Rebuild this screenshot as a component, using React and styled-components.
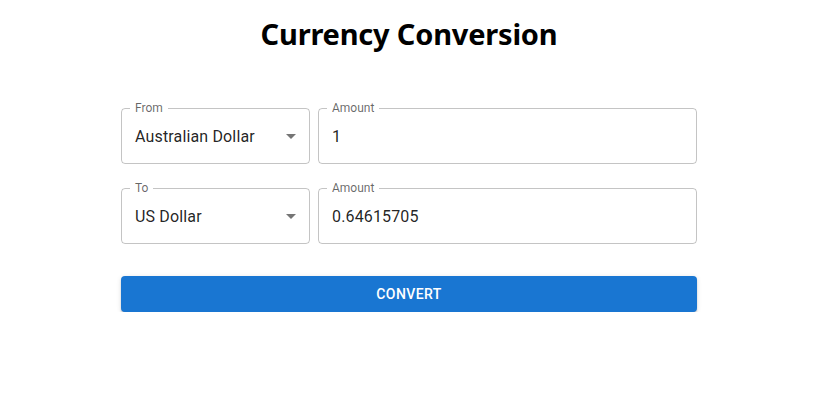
import React from 'react';
import styled, { createGlobalStyle } from 'styled-components';

const GlobalStyle = createGlobalStyle`
  body {
    margin: 0;
    background: #fff;
    font-family: Roboto, "Liberation Sans", sans-serif;
    color: rgba(0, 0, 0, 0.87);
  }
`;

const Page = styled.div`
  width: 576px;
  margin: 0 auto;
  padding: 14px 2px 0 0;
`;

const Title = styled.h1`
  margin: 0 0 54px;
  text-align: center;
  font-family: "Noto Sans", "Open Sans", sans-serif;
  font-weight: 700;
  font-size: 29px;
  line-height: 40px;
  color: #000;
  letter-spacing: -0.2px;
`;

const Row = styled.div`
  display: grid;
  grid-template-columns: 189px 1fr;
  gap: 8px;
  margin-bottom: 24px;
`;

const Field = styled.div`
  position: relative;
  height: 56px;
  box-sizing: border-box;
  display: flex;
  align-items: center;
  padding: 0 14px;
`;

const Outline = styled.fieldset`
  position: absolute;
  inset: -5px 0 0 0;
  margin: 0;
  padding: 0 8px;
  border: 1px solid rgba(0, 0, 0, 0.23);
  border-radius: 4px;
  pointer-events: none;
  text-align: left;
`;

const Legend = styled.legend`
  padding: 0 5px;
  font-size: 12px;
  line-height: 11px;
  color: rgba(0, 0, 0, 0.6);
  font-family: Roboto, sans-serif;
`;

const Value = styled.span`
  font-size: 16px;
  letter-spacing: 0.15px;
  flex: 1;
  white-space: nowrap;
`;

const Arrow = styled.svg`
  position: absolute;
  right: 7px;
  top: 16px;
  width: 24px;
  height: 24px;
  fill: rgba(0, 0, 0, 0.54);
`;

const ConvertButton = styled.button`
  display: block;
  width: 100%;
  height: 36px;
  margin-top: 32px;
  border: 0;
  border-radius: 4px;
  background: #1976d2;
  color: #fff;
  font-family: Roboto, sans-serif;
  font-weight: 500;
  font-size: 14px;
  letter-spacing: 0.4px;
  text-transform: uppercase;
  box-shadow: 0 3px 1px -2px rgba(0, 0, 0, 0.2), 0 2px 2px 0 rgba(0, 0, 0, 0.14),
    0 1px 5px 0 rgba(0, 0, 0, 0.12);
  cursor: pointer;
`;

function OutlinedField({ label, value, select }) {
  return (
    <Field>
      <Value>{value}</Value>
      {select && (
        <Arrow viewBox="0 0 24 24">
          <path d="M7 10l5 5 5-5z" />
        </Arrow>
      )}
      <Outline>
        <Legend>{label}</Legend>
      </Outline>
    </Field>
  );
}

export default function App() {
  return (
    <>
      <GlobalStyle />
      <Page>
        <Title>Currency Conversion</Title>
        <Row>
          <OutlinedField label="From" value="Australian Dollar" select />
          <OutlinedField label="Amount" value="1" />
        </Row>
        <Row>
          <OutlinedField label="To" value="US Dollar" select />
          <OutlinedField label="Amount" value="0.64615705" />
        </Row>
        <ConvertButton>Convert</ConvertButton>
      </Page>
    </>
  );
}
